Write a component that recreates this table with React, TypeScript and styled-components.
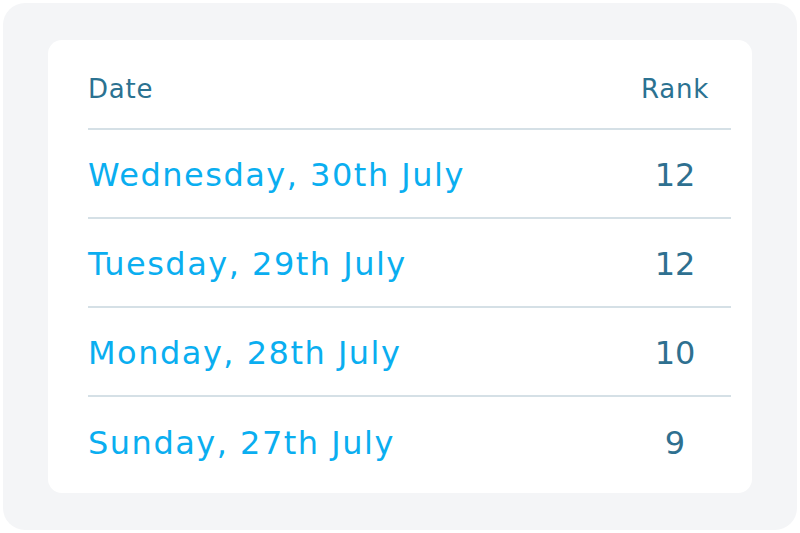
import { createGlobalStyle, styled } from 'styled-components';

const rows = [
  { date: 'Wednesday, 30th July', rank: 12 },
  { date: 'Tuesday, 29th July', rank: 12 },
  { date: 'Monday, 28th July', rank: 10 },
  { date: 'Sunday, 27th July', rank: 9 },
];

function App() {
  return (
    <>
      <GlobalStyle />
      <Frame>
        <Card>
          <HeaderRow>
            <HeadCell>Date</HeadCell>
            <HeadCell $rank>Rank</HeadCell>
          </HeaderRow>
          {rows.map((r, i) => (
            <Row key={r.date} $last={i === rows.length - 1}>
              <DateCell>{r.date}</DateCell>
              <RankCell>{r.rank}</RankCell>
            </Row>
          ))}
        </Card>
      </Frame>
    </>
  );
}

const GlobalStyle = createGlobalStyle`
  body {
    margin: 0;
    background: #ffffff;
    font-family: "DejaVu Sans", "Liberation Sans", sans-serif;
  }
`;

const Frame = styled.div`
  margin: 3px;
  width: 794px;
  height: 527px;
  box-sizing: border-box;
  padding: 37px 45px;
  background: #f4f5f7;
  border-radius: 22px;
`;

const Card = styled.div`
  height: 453px;
  box-sizing: border-box;
  padding: 0 21px 9px 40px;
  background: #ffffff;
  border-radius: 14px;
`;

const RowBase = styled.div`
  display: grid;
  grid-template-columns: 1fr 112px;
  align-items: center;
  box-sizing: border-box;
`;

const HeaderRow = styled(RowBase)`
  height: 90px;
  padding-top: 10px;
  border-bottom: 2px solid #d5e0e6;
`;

const HeadCell = styled.div<{ $rank?: boolean }>`
  font-size: 26px;
  letter-spacing: 0.8px;
  color: #2b7291;
  text-align: ${(p) => (p.$rank ? 'center' : 'left')};
`;

const Row = styled(RowBase)<{ $last?: boolean }>`
  height: 89px;
  padding-top: 2px;
  border-bottom: ${(p) => (p.$last ? 'none' : '2px solid #d5e0e6')};
`;

const DateCell = styled.div`
  font-size: 32px;
  letter-spacing: 1.5px;
  color: #0aaef0;
`;

const RankCell = styled.div`
  font-size: 32px;
  color: #2e7090;
  text-align: center;
`;

export default App;
